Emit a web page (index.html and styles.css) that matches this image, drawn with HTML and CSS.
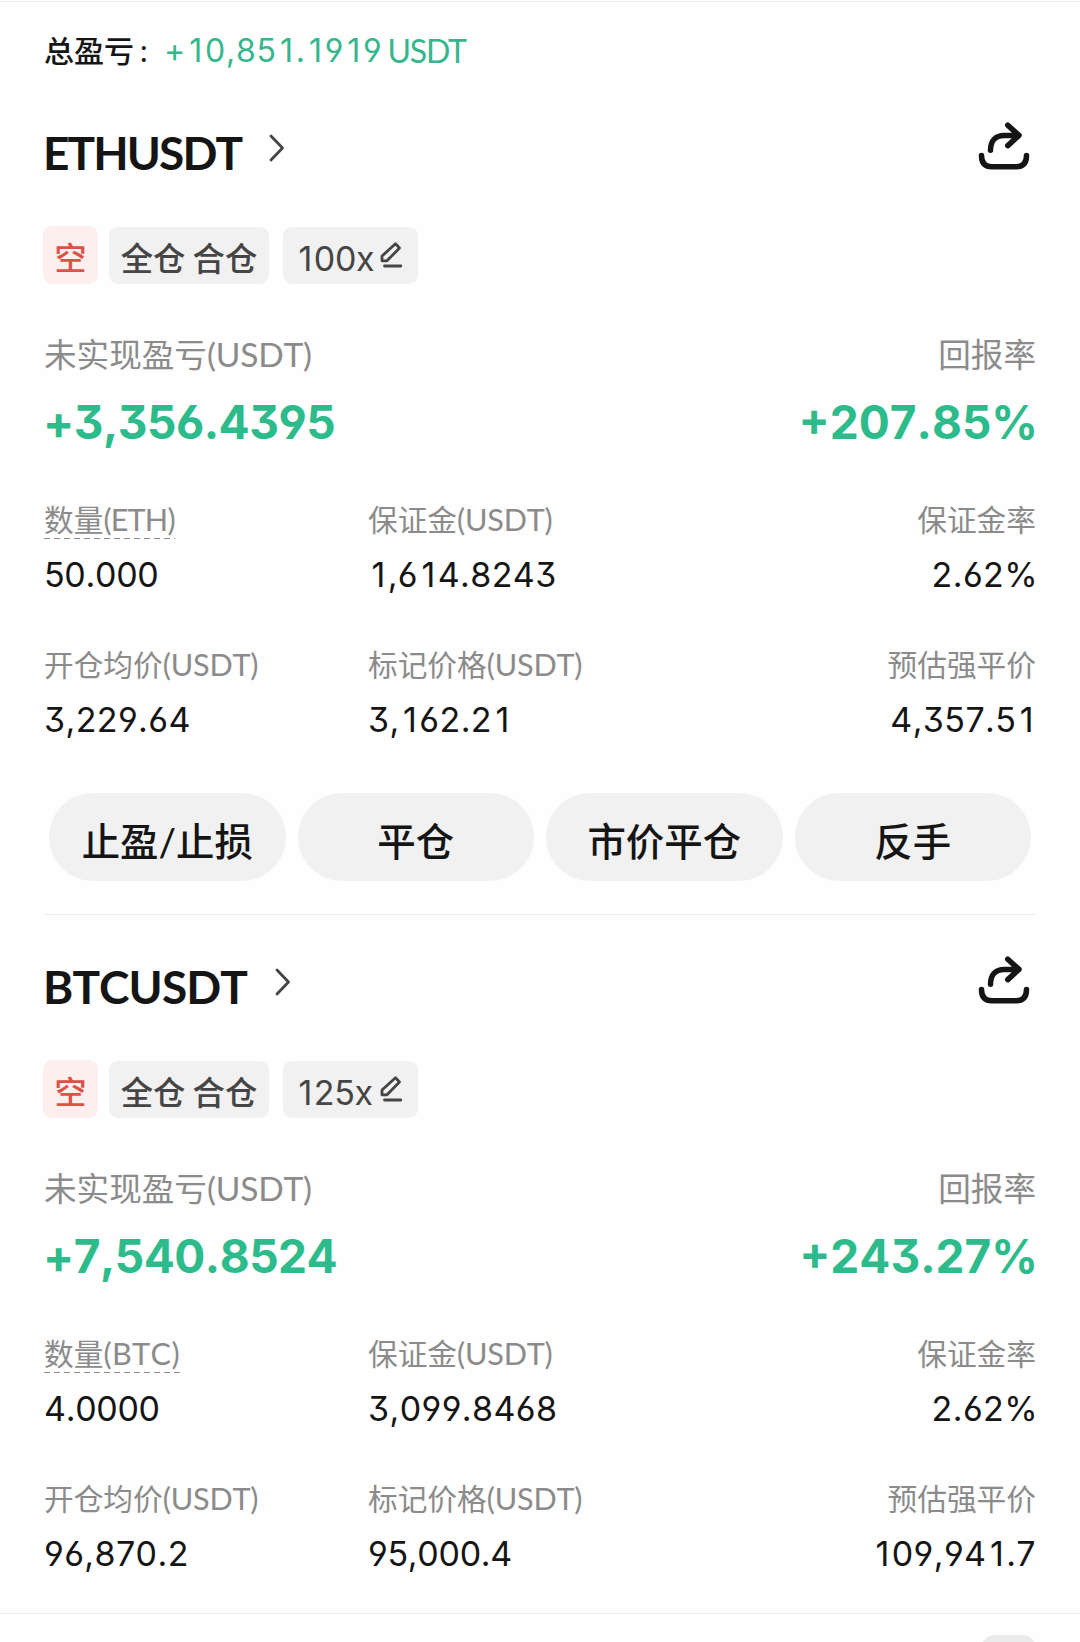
FILE: index.html
```html
<!DOCTYPE html>
<html lang="zh-CN">
<head>
<meta charset="utf-8">
<title>持仓</title>
<link rel="stylesheet" href="styles.css">
</head>
<body>
<svg class="sprite" aria-hidden="true">
  <symbol id="chevron" viewBox="0 0 16 28"><path d="M2 2 13.5 14 2 26"/></symbol>
  <symbol id="share" viewBox="0 0 52 48"><path d="M12.500 28.300C12.500 18.500 18 13.400 26 13.400H40M29.800 3.200 41 13.400 29.800 23.600M3.500 33.500q0 11.300 10.500 11.300h24q10.500 0 10.500-11.300"/></symbol>
  <symbol id="pen" viewBox="0 0 24 28"><path d="M3 19.800v-4.800L16.500 2.800 20.500 7 8 19.800ZM5.500 25H21.800"/></symbol>
</svg>
<main class="page">
  <div class="summary">
    <span class="summary-label">总盈亏<span class="colon">:</span></span>
    <span class="summary-value"><span class="num">+<i>1</i>0,85<i>1</i>.<i>1</i>9<i>1</i>9</span><span class="unit">USDT</span></span>
  </div>

  <section class="position">
    <header class="head">
      <h2 class="symbol">ETHUSDT</h2>
      <svg class="chevron"><use href="#chevron"/></svg>
      <svg class="share"><use href="#share"/></svg>
    </header>
    <div class="tags">
      <span class="tag tag-short">空</span>
      <span class="tag tag-mode">全仓 合仓</span>
      <span class="tag tag-lever"><span class="num"><i>1</i>00x</span><svg class="pen"><use href="#pen"/></svg></span>
    </div>
    <div class="main-row">
      <div><div class="label">未实现盈亏<span class="lat">(USDT)</span></div><div class="value num">+3,356.4395</div></div>
      <div class="end"><div class="label">回报率</div><div class="value num pct">+207.85%</div></div>
    </div>
    <div class="grid">
      <div><div class="label"><span class="dashed">数量<span class="lat short">(ETH)</span></span></div><div class="value num tight">50.000</div></div>
      <div><div class="label">保证金<span class="lat">(USDT)</span></div><div class="value num"><i>1</i>,6<i>1</i>4.8243</div></div>
      <div class="end"><div class="label">保证金率</div><div class="value num pct">2.62%</div></div>
      <div><div class="label">开仓均价<span class="lat">(USDT)</span></div><div class="value num">3,229.64</div></div>
      <div><div class="label">标记价格<span class="lat">(USDT)</span></div><div class="value num">3,<i>1</i>62.2<i>1</i></div></div>
      <div class="end"><div class="label">预估强平价</div><div class="value num">4,357.5<i>1</i></div></div>
    </div>
    <div class="actions">
      <button class="btn">止盈/止损</button>
      <button class="btn">平仓</button>
      <button class="btn">市价平仓</button>
      <button class="btn">反手</button>
    </div>
  </section>

  <section class="position position-last">
    <header class="head">
      <h2 class="symbol loose">BTCUSDT</h2>
      <svg class="chevron"><use href="#chevron"/></svg>
      <svg class="share"><use href="#share"/></svg>
    </header>
    <div class="tags">
      <span class="tag tag-short">空</span>
      <span class="tag tag-mode">全仓 合仓</span>
      <span class="tag tag-lever"><span class="num"><i>1</i>25x</span><svg class="pen"><use href="#pen"/></svg></span>
    </div>
    <div class="main-row">
      <div><div class="label">未实现盈亏<span class="lat">(USDT)</span></div><div class="value num">+7,540.8524</div></div>
      <div class="end"><div class="label">回报率</div><div class="value num pct">+243.27%</div></div>
    </div>
    <div class="grid">
      <div><div class="label"><span class="dashed">数量<span class="lat loose">(BTC)</span></span></div><div class="value num tight">4.0000</div></div>
      <div><div class="label">保证金<span class="lat">(USDT)</span></div><div class="value num">3,099.8468</div></div>
      <div class="end"><div class="label">保证金率</div><div class="value num pct">2.62%</div></div>
      <div><div class="label">开仓均价<span class="lat">(USDT)</span></div><div class="value num">96,870.2</div></div>
      <div><div class="label">标记价格<span class="lat">(USDT)</span></div><div class="value num tight">95,000.4</div></div>
      <div class="end"><div class="label">预估强平价</div><div class="value num"><i>1</i>09,94<i>1</i>.7</div></div>
    </div>
  </section>

  <footer class="bottom"><span class="handle"></span></footer>
</main>
</body>
</html>
```
FILE: styles.css
```css
* { box-sizing: border-box; }

body {
  margin: 0;
  background: #fefefe;
  color: #151515;
  font-family: Lato, "Noto Sans CJK SC", sans-serif;
}

.sprite { position: absolute; width: 0; height: 0; }

.page {
  height: 1642px;
  overflow: hidden;
  padding-top: 1px;
}

.num {
  font-family: Inter, "Noto Sans CJK SC", sans-serif;
  font-feature-settings: "cv03", "cv04", "cv09";
  font-kerning: none;
}

/* the narrow "1" takes the full digit width */
.num i { padding: 0 0.06em 0 0.1em; font-style: normal; }

.summary {
  display: flex;
  align-items: center;
  height: 80px;
  padding: 18px 44px 0 44px;
  border-top: 1px solid #ececec;
}

.summary-label { width: 120px; font-size: 30px; line-height: 40px; font-weight: 500; margin-top: -2px; }
.colon { margin-left: 6px; }
.summary-value {
  display: flex;
  gap: 5px;
  color: #35b68c;
  font-size: 32px;
  line-height: 40px;
}
.summary-value .num { letter-spacing: 0.8px; }
.unit { letter-spacing: -1.2px; }

.position {
  height: 834px;
  margin: 0 44px;
  border-bottom: 1px solid #ececec;
}

.position-last { height: 698px; border-bottom: 0; }

.head { display: flex; align-items: center; height: 145px; }

.symbol {
  margin: -2px 0 0 -1px;
  font-size: 46px;
  line-height: 56px;
  font-weight: 700;
  font-kerning: none;
  letter-spacing: -1.9px;
}
.symbol.loose { letter-spacing: -0.9px; }

.chevron, .share, .pen {
  fill: none;
  stroke: currentColor;
  stroke-linecap: round;
  stroke-linejoin: round;
}

.chevron { width: 16px; height: 28px; margin: 0 0 11px 28px; color: #444; stroke-width: 2.8; }
.share { width: 52px; height: 48px; margin: 0 6px 16px auto; stroke-width: 5.5; }

.tags { display: flex; align-items: flex-end; height: 58px; margin-left: -1px; }

.tag {
  display: flex;
  align-items: center;
  justify-content: center;
  height: 57px;
  border-radius: 9px;
  background: #f1f1f1;
  color: #454545;
  font-size: 33px;
}

.tag-short { width: 55px; height: 58px; margin-right: 11px; background: #fcefee; color: #dc5247; font-size: 32px; font-weight: 500; padding-top: 1px; }
.tag-mode { width: 160px; margin-right: 14px; padding-top: 1px; font-weight: 500; font-size: 32.4px; word-spacing: -1px; }
.tag-lever { width: 135px; justify-content: flex-start; padding-left: 12px; gap: 4px; }
.tag-lever .num { width: 80px; font-size: 34px; padding-top: 5px; letter-spacing: -0.4px; }
.pen { width: 24px; height: 28px; stroke-width: 2.8; margin-bottom: 2px; }

.main-row { display: flex; justify-content: space-between; margin-top: 50px; }
.end { text-align: right; }
.end .pct { margin-right: -2px; }

.label { color: #8b8b8b; white-space: nowrap; }
.lat { font-size: 1.03em; font-kerning: none; letter-spacing: -0.2px; }
.lat.short { letter-spacing: -0.8px; }
.lat.loose { letter-spacing: 0.4px; }

.main-row .label { font-size: 32.6px; line-height: 41px; }
.main-row .value {
  margin-top: 22px;
  margin-left: -1px;
  color: #2dbb8b;
  font-size: 46px;
  line-height: 50px;
  font-weight: 650;
  letter-spacing: -0.5px;
}
.main-row .pct { letter-spacing: 0; }

.grid {
  display: grid;
  grid-template-columns: 324px 1fr auto;
  row-gap: 51px;
  margin-top: 54px;
}
.grid .label { font-size: 29.7px; line-height: 37px; }
.grid .value { margin-top: 17px; font-size: 34px; line-height: 40px; letter-spacing: 0.4px; }
.grid .tight { letter-spacing: -0.3px; }

.dashed {
  display: inline-block;
  padding-bottom: 1px;
  margin-bottom: -1px;
  background: repeating-linear-gradient(90deg, #8b8b8b 0 6px, transparent 6px 10px) left bottom / 100% 1.5px no-repeat;
}

.actions { display: grid; grid-template-columns: repeat(4, 1fr); gap: 12px; margin: 53px 5px 0; }

.btn {
  height: 88px;
  padding: 7px 0 0;
  border: 0;
  border-radius: 44px;
  background: #f1f1f1;
  color: #151515;
  font: 500 38.4px/48px Lato, "Noto Sans CJK SC", sans-serif;
}

.bottom {
  display: flex;
  justify-content: flex-end;
  height: 29px;
  padding: 21px 45px 0;
  border-top: 1px solid #ececec;
}
.handle { width: 53px; height: 30px; flex: none; border-radius: 12px; background: #ebebeb; }
```
